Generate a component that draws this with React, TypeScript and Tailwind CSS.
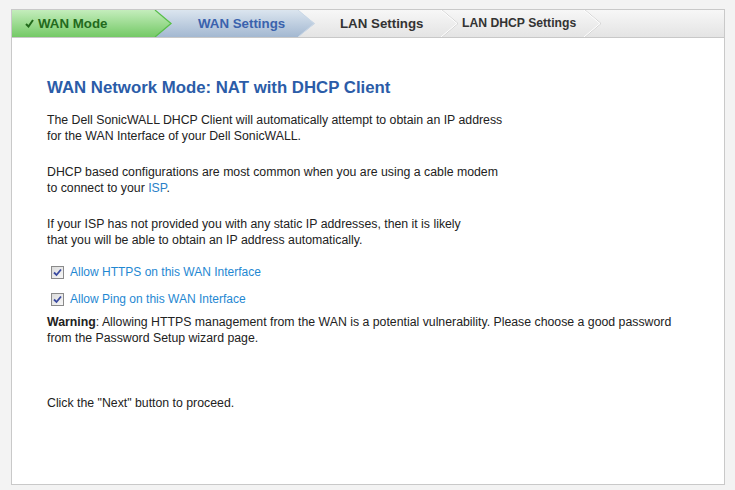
import React from 'react';

type Tab = {
  label: string;
  kind: 'done' | 'active' | 'todo';
  pad: string;
  size: string;
};

const tabs: Tab[] = [
  { label: 'WAN Mode', kind: 'done', pad: 'pl-[13px]', size: 'text-[13.3px]' },
  { label: 'WAN Settings', kind: 'active', pad: 'pl-[43px]', size: 'text-[13.3px]' },
  { label: 'LAN Settings', kind: 'todo', pad: 'pl-[42px]', size: 'text-[13.3px]' },
  { label: 'LAN DHCP Settings', kind: 'todo', pad: 'pl-[21px]', size: 'text-[12.2px]' },
];

// chevron background for one step of the wizard
function Chevron({ kind, id }: { kind: Tab['kind']; id: string }) {
  const body = '0,0 143,0 160,13.5 143,27 0,27';
  return (
    <svg className="absolute inset-0" width="160" height="27" viewBox="0 0 160 27">
      <defs>
        <linearGradient id={`g-${id}`} x1="0" y1="0" x2="0" y2="1">
          {kind === 'done' && (
            <>
              <stop offset="0" stopColor="#c4edbc" />
              <stop offset="1" stopColor="#74c966" />
            </>
          )}
          {kind === 'active' && (
            <>
              <stop offset="0" stopColor="#dbe5ef" />
              <stop offset="1" stopColor="#a3b8d1" />
            </>
          )}
        </linearGradient>
      </defs>
      {kind !== 'todo' && <polygon points={body} fill={`url(#g-${id})`} />}
      {kind === 'done' && (
        <polyline points="143,0 159,13.5 143,27" fill="none" stroke="#58bd4a" strokeWidth="1.2" />
      )}
      {kind === 'active' && (
        <polyline points="143,0 159,13.5 143,27" fill="none" stroke="#c9d7e6" strokeWidth="1" />
      )}
      {kind === 'todo' && (
        <>
          <polyline points="144,0 160,13.5 144,27" fill="none" stroke="#d2d2d2" strokeWidth="1" />
          <polyline points="143,0 159,13.5 143,27" fill="none" stroke="#ffffff" strokeWidth="1" />
        </>
      )}
    </svg>
  );
}

function CheckBox() {
  return (
    <span className="flex h-[13px] w-[13px] items-center justify-center border border-[#8a8a8a] bg-gradient-to-br from-[#dcdcdc] to-[#f7f7f7]">
      <svg width="9" height="9" viewBox="0 0 9 9">
        <path d="M1 4.5 L3.5 7 L8 1.5" fill="none" stroke="#3a4aa0" strokeWidth="1.8" />
      </svg>
    </span>
  );
}

export default function App() {
  return (
    <div className="h-[490px] w-[735px] bg-[#f3f3f3] pl-[11px] pr-[10px] pt-[9px] font-['Liberation_Sans',Arial,sans-serif] text-[12.3px] text-[#222]">
      <div className="flex h-[476px] flex-col border border-[#c9c9c9] bg-white">
        {/* wizard steps */}
        <div className="flex h-[28px] border-b border-[#c8c8c8] bg-gradient-to-b from-[#f7f7f7] to-[#e4e4e4]">
          {tabs.map((t, i) => (
            <div
              key={t.label}
              className={`relative -mr-[17px] flex h-[27px] w-[160px] shrink-0 items-center ${t.pad}`}
              style={{ zIndex: 10 - i }}
            >
              <Chevron kind={t.kind} id={String(i)} />
              <span
                className={`relative flex items-center font-bold ${t.size} ${
                  t.kind === 'done'
                    ? 'text-[#236a1c]'
                    : t.kind === 'active'
                    ? 'text-[#3a62ad]'
                    : 'text-[#333]'
                }`}
              >
                {t.kind === 'done' && (
                  <svg width="9" height="9" viewBox="0 0 9 9" className="mr-[4px]">
                    <path d="M1 5 L3.5 7.5 L8 1" fill="none" stroke="#236a1c" strokeWidth="2" />
                  </svg>
                )}
                {t.label}
              </span>
            </div>
          ))}
        </div>

        {/* content */}
        <div className="pl-[35px] pt-[40px] leading-[16px]">
          <h1 className="text-[16.8px] font-bold leading-[20px] text-[#2b5ca8]">
            WAN Network Mode: NAT with DHCP Client
          </h1>
          <p className="mt-[14px]">
            The Dell SonicWALL DHCP Client will automatically attempt to obtain an IP address
            <br />
            for the WAN Interface of your Dell SonicWALL.
          </p>
          <p className="mt-[20px]">
            DHCP based configurations are most common when you are using a cable modem
            <br />
            to connect to your <span className="text-[#2a7fc8]">ISP</span>.
          </p>
          <p className="mt-[20px]">
            If your ISP has not provided you with any static IP addresses, then it is likely
            <br />
            that you will be able to obtain an IP address automatically.
          </p>

          <label className="ml-[4px] mt-[14px] flex h-[20px] items-center gap-[6px] text-[12px] text-[#1f88d2]">
            <CheckBox />
            Allow HTTPS on this WAN Interface
          </label>
          <label className="ml-[4px] mt-[7px] flex h-[20px] items-center gap-[6px] text-[12px] text-[#1f88d2]">
            <CheckBox />
            Allow Ping on this WAN Interface
          </label>

          <p className="mt-[5px]">
            <b>Warning</b>: Allowing HTTPS management from the WAN is a potential vulnerability. Please
            choose a good password
            <br />
            from the Password Setup wizard page.
          </p>

          <p className="mt-[49px]">Click the "Next" button to proceed.</p>
        </div>
      </div>
    </div>
  );
}
